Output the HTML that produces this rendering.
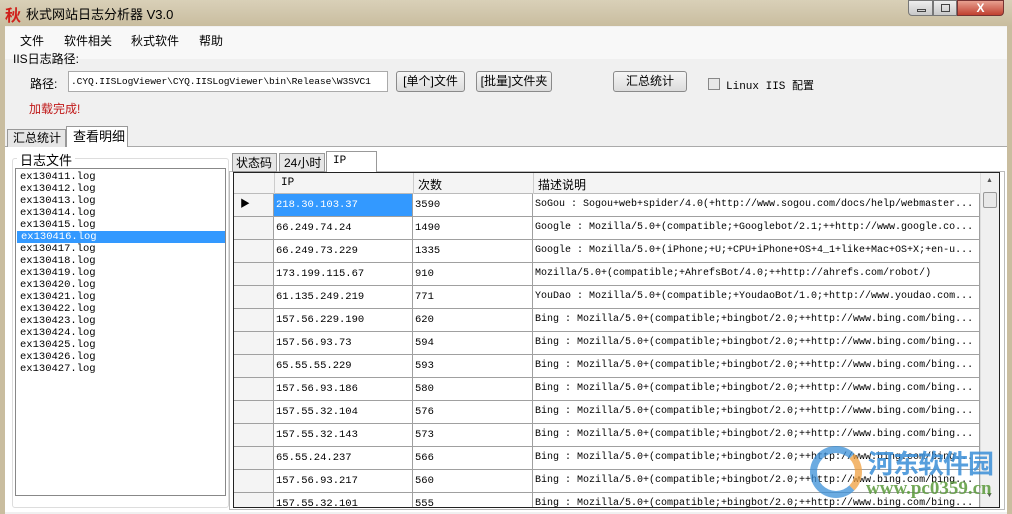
<!DOCTYPE html><html><head><meta charset="utf-8"><style>
*{margin:0;padding:0;box-sizing:border-box}
body{width:1012px;height:514px;overflow:hidden;background:#f0f0f0;position:relative;font-family:"Liberation Sans","Noto Sans CJK SC",sans-serif;font-size:12px;color:#000}
.a{position:absolute}
.mono{font-family:"Liberation Mono","Noto Sans CJK SC",monospace;font-size:10px}
.title{left:0;top:0;width:1012px;height:26px;background:linear-gradient(#d9d0b8,#c9bd9f)}
.btn{position:absolute;border:1px solid #8a8a8a;border-radius:3px;background:linear-gradient(#f6f6f6,#dcdcdc);text-align:center;line-height:19px;height:21px}
.c{position:absolute;top:0;height:22px;line-height:22px;padding-left:2px;white-space:nowrap;overflow:hidden;border-right:1px solid #a0a0a0;background:#fff}
</style></head><body>
<div class="a title"></div>
<div class="a" style="left:5px;top:2px;color:#d0201a;font-size:16px;font-weight:bold">秋</div>
<div class="a" style="left:26px;top:4px;font-size:13px">秋式网站日志分析器 V3.0</div>
<div class="a" style="left:908px;top:0;width:25px;height:16px;border:1px solid #777;border-radius:0 0 0 4px;background:linear-gradient(#eee,#c8c8c8)"><div class="a" style="left:8px;top:8px;width:9px;height:3px;border:1px solid #444"></div></div>
<div class="a" style="left:933px;top:0;width:24px;height:16px;border:1px solid #777;background:linear-gradient(#eee,#c8c8c8)"><div class="a" style="left:7px;top:3px;width:9px;height:8px;border:1px solid #444"></div></div>
<div class="a" style="left:957px;top:0;width:47px;height:16px;border:1px solid #733;border-radius:0 0 4px 0;background:linear-gradient(#e8a090,#c04030);color:#fff;text-align:center;font-weight:bold;line-height:14px">X</div>
<div class="a" style="left:0;top:26px;width:5px;height:488px;background:#c9bd9f"></div>
<div class="a" style="left:1007px;top:26px;width:5px;height:488px;background:#c9bd9f"></div>
<div class="a" style="left:5px;top:27px;width:1002px;height:32px;background:#f8f8f8"></div>
<div class="a" style="left:20px;top:32px">文件</div>
<div class="a" style="left:64px;top:32px">软件相关</div>
<div class="a" style="left:131px;top:32px">秋式软件</div>
<div class="a" style="left:199px;top:32px">帮助</div>
<div class="a" style="left:13px;top:50px">IIS日志路径:</div>
<div class="a" style="left:30px;top:75px">路径:</div>
<div class="a mono" style="left:68px;top:71px;width:320px;height:21px;border:1px solid #aaa;background:#fff;line-height:19px;padding-left:2px;font-size:9.6px;letter-spacing:-0.1px;overflow:hidden;white-space:nowrap">.CYQ.IISLogViewer\CYQ.IISLogViewer\bin\Release\W3SVC1</div>
<div class="btn" style="left:396px;top:71px;width:69px">[单个]文件</div>
<div class="btn" style="left:476px;top:71px;width:76px">[批量]文件夹</div>
<div class="btn" style="left:613px;top:71px;width:74px">汇总统计</div>
<div class="a" style="left:708px;top:78px;width:12px;height:12px;border:1px solid #888;background:#e8e8e8"></div>
<div class="a mono" style="left:726px;top:77px;font-size:11px">Linux IIS 配置</div>
<div class="a" style="left:29px;top:100px;color:#c01818">加载完成!</div>
<div class="a" style="left:5px;top:146px;width:1002px;height:366px;border-top:1px solid #aaa;background:#fff"></div>
<div class="a" style="left:7px;top:129px;width:59px;height:18px;border:1px solid #999;border-bottom:none;background:#e6e6e6;padding-left:5px;line-height:17px">汇总统计</div>
<div class="a" style="left:66px;top:126px;width:62px;height:21px;border:1px solid #999;border-bottom:none;background:#fff;padding-left:6px;line-height:19px;font-size:13px">查看明细</div>
<div class="a" style="left:12px;top:158px;width:217px;height:350px;border:1px solid #ddd;border-radius:3px"></div>
<div class="a" style="left:17px;top:150px;background:#fff;padding:0 3px;font-size:13px">日志文件</div>
<div class="a mono" style="left:15px;top:168px;width:211px;height:328px;border:1px solid #888;background:#fff;line-height:12px;padding-top:2px;font-size:10.5px">
<div style="padding-left:4px">ex130411.log</div><div style="padding-left:4px">ex130412.log</div><div style="padding-left:4px">ex130413.log</div><div style="padding-left:4px">ex130414.log</div><div style="padding-left:4px">ex130415.log</div><div style="padding-left:4px;background:#3399ff;color:#fff;margin-left:1px">ex130416.log</div><div style="padding-left:4px">ex130417.log</div><div style="padding-left:4px">ex130418.log</div><div style="padding-left:4px">ex130419.log</div><div style="padding-left:4px">ex130420.log</div><div style="padding-left:4px">ex130421.log</div><div style="padding-left:4px">ex130422.log</div><div style="padding-left:4px">ex130423.log</div><div style="padding-left:4px">ex130424.log</div><div style="padding-left:4px">ex130425.log</div><div style="padding-left:4px">ex130426.log</div><div style="padding-left:4px">ex130427.log</div></div>
<div class="a" style="left:229px;top:171px;width:776px;height:339px;border:1px solid #bbb"></div>
<div class="a" style="left:232px;top:153px;width:45px;height:19px;border:1px solid #999;background:#e6e6e6;padding-left:3px;line-height:18px">状态码</div>
<div class="a" style="left:279px;top:153px;width:46px;height:19px;border:1px solid #999;background:#e6e6e6;padding-left:4px;line-height:18px">24小时</div>
<div class="a mono" style="left:326px;top:151px;width:51px;height:21px;border:1px solid #999;border-bottom:none;background:#fff;padding-left:6px;line-height:18px;font-size:11px">IP</div>
<div class="a" style="left:233px;top:172px;width:767px;height:336px;border:1px solid #222;background:#fff"></div>
<div class="a" style="left:234px;top:173px;width:746px;height:21px;background:#f4f4f4;border-bottom:1px solid #bbb"></div>
<div class="a mono" style="left:281px;top:177px;font-size:11px">IP</div>
<div class="a" style="left:418px;top:176px">次数</div>
<div class="a" style="left:538px;top:176px">描述说明</div>
<div class="a" style="left:274px;top:173px;width:1px;height:21px;background:#ccc"></div>
<div class="a" style="left:413px;top:173px;width:1px;height:21px;background:#ccc"></div>
<div class="a" style="left:533px;top:173px;width:1px;height:21px;background:#ccc"></div>
<div class="a" style="left:980px;top:173px;width:19px;height:334px;background:#f0f0f0;border-left:1px solid #ddd"></div>
<div class="a" style="left:983px;top:192px;width:14px;height:16px;border:1px solid #999;border-radius:2px;background:#e8e8e8"></div>
<div class="a" style="left:986px;top:177px;font-size:7px;color:#555">▲</div>
<div class="a" style="left:986px;top:492px;font-size:7px;color:#555">▼</div>
<div class="a" style="left:234px;top:194px;width:746px;height:313px;overflow:hidden" id="g"></div>
<script>
const d=[["218.30.103.37","3590","SoGou : Sogou+web+spider/4.0(+http://www.sogou.com/docs/help/webmaster..."],["66.249.74.24","1490","Google : Mozilla/5.0+(compatible;+Googlebot/2.1;++http://www.google.co..."],["66.249.73.229","1335","Google : Mozilla/5.0+(iPhone;+U;+CPU+iPhone+OS+4_1+like+Mac+OS+X;+en-u..."],["173.199.115.67","910","Mozilla/5.0+(compatible;+AhrefsBot/4.0;++http://ahrefs.com/robot/)"],["61.135.249.219","771","YouDao : Mozilla/5.0+(compatible;+YoudaoBot/1.0;+http://www.youdao.com..."]];
const b="Bing : Mozilla/5.0+(compatible;+bingbot/2.0;++http://www.bing.com/bing...";
[["157.56.229.190","620"],["157.56.93.73","594"],["65.55.55.229","593"],["157.56.93.186","580"],["157.55.32.104","576"],["157.55.32.143","573"],["65.55.24.237","566"],["157.56.93.217","560"],["157.55.32.101","555"]].forEach(r=>d.push([r[0],r[1],b]));
let h="";d.forEach((r,i)=>{const s=i==0;h+=`<div style="position:absolute;left:0;top:${i*23}px;width:746px;height:23px;border-bottom:1px solid #a0a0a0;background:#fff">
<div style="position:absolute;left:0;top:0;width:40px;height:22px;background:#f4f4f4;border-right:1px solid #a0a0a0;font-size:10px;line-height:22px;padding-left:6px">${s?"▶":""}</div>
<div class="c mono" style="left:40px;width:139px;font-size:10.5px;${s?"background:#3399ff;color:#fff":""}">${r[0]}</div>
<div class="c mono" style="left:179px;width:120px;font-size:10.5px">${r[1]}</div>
<div class="c mono" style="left:299px;width:447px;font-size:10px">${r[2]}</div></div>`});
document.getElementById("g").innerHTML=h;
</script>
<div class="a" style="left:810px;top:446px;width:52px;height:52px;border-radius:50%;border:7px solid #3a8fd8;border-right-color:#f0a040;opacity:.75"></div>
<div class="a" style="left:868px;top:444px;font-size:26px;font-weight:bold;color:#3a8fd8;opacity:.85;letter-spacing:-1px">河东软件园</div>
<div class="a" style="left:866px;top:478px;font-size:19px;font-weight:bold;color:#5a9a3a;opacity:.85;font-family:'Liberation Serif',serif">www.pc0359.cn</div>
</body></html>
